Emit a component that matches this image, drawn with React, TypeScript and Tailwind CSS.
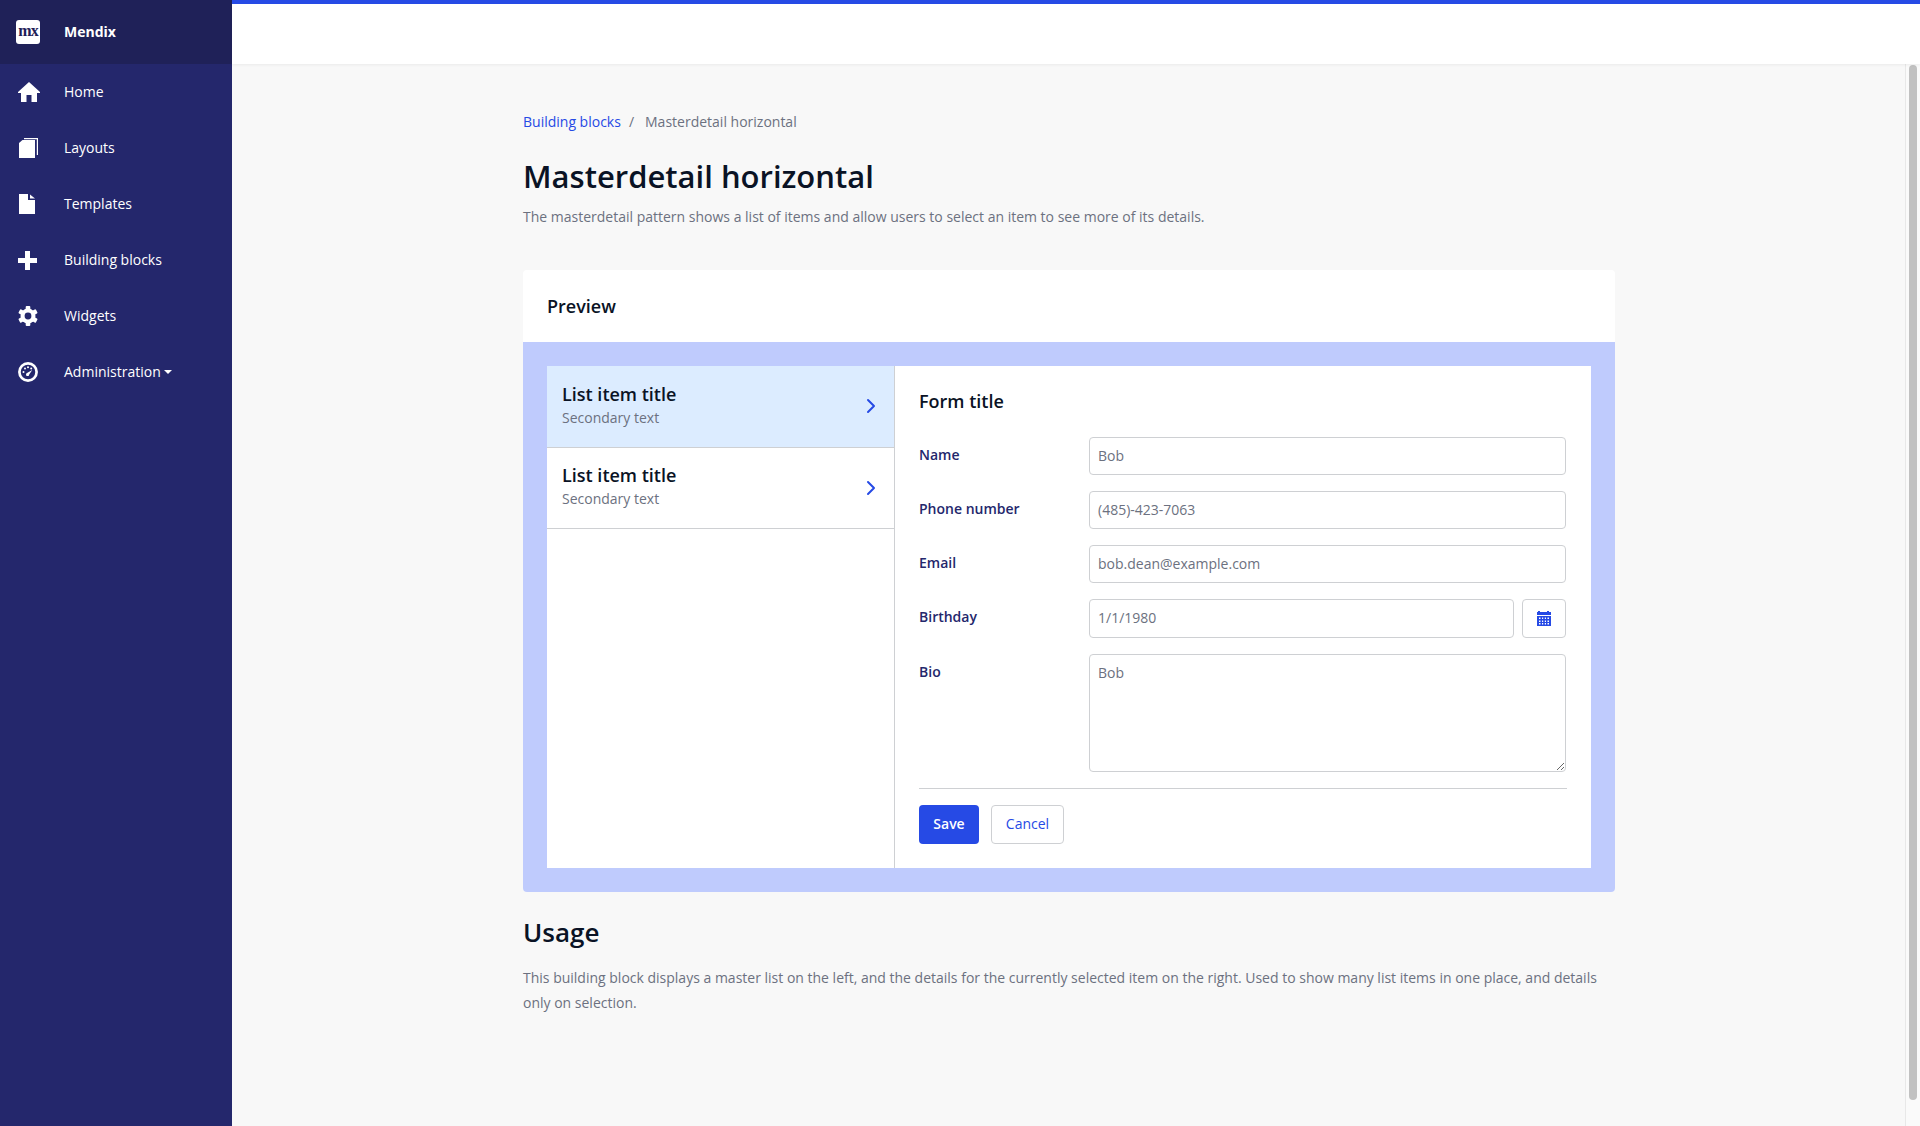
import React from 'react';
import { ChevronRight } from 'lucide-react';

const HomeIcon = () => (
  <svg width="22" height="20" viewBox="0 0 22 20" fill="white">
    <path d="M11 0 L22 10 L22 11 L19 11 L19 20 L13.5 20 L13.5 13 L8.5 13 L8.5 20 L3 20 L3 11 L0 11 L0 10 Z" />
  </svg>
);

const BookIcon = () => (
  <svg width="19" height="20" viewBox="0 0 19 20" fill="white" className="ml-px">
    <path d="M3.5 2 L16 2 L16 20 L0 20 L0 5 Z" />
    <path d="M5 0 H19 V17 H17.8 V1.2 H5 Z" />
  </svg>
);

const FileIcon = () => (
  <svg width="16" height="20" viewBox="0 0 16 20" fill="white" className="ml-px">
    <path d="M0 0 L9 0 L9 6 L16 6 L16 20 L0 20 Z" />
    <path d="M11 0.5 L16 4.5 L11 4.5 Z" />
  </svg>
);

const PlusIcon = () => (
  <svg width="19" height="19" viewBox="0 0 19 19" fill="white">
    <path d="M7 0 L12 0 L12 7 L19 7 L19 12 L12 12 L12 19 L7 19 L7 12 L0 12 L0 7 L7 7 Z" />
  </svg>
);

const GearIcon = () => (
  <svg width="20" height="20" viewBox="0 0 20 20">
    <g fill="white">
      <circle cx="10" cy="10" r="7.5" />
      <rect x="7.7" y="0" width="4.6" height="20" rx="1" />
      <rect x="7.7" y="0" width="4.6" height="20" rx="1" transform="rotate(60 10 10)" />
      <rect x="7.7" y="0" width="4.6" height="20" rx="1" transform="rotate(120 10 10)" />
    </g>
    <circle cx="10" cy="10" r="3.4" fill="#24276c" />
  </svg>
);

const GaugeIcon = () => (
  <svg width="20" height="20" viewBox="0 0 20 20">
    <circle cx="10" cy="10" r="8.6" fill="none" stroke="white" strokeWidth="2.7" />
    <g fill="white">
      <circle cx="5.5" cy="10" r="1" />
      <circle cx="7" cy="6.5" r="1" />
      <circle cx="10" cy="5.2" r="1" />
      <circle cx="13.2" cy="6.5" r="1" />
      <path d="M14.3 8 L11.2 12.4 A1.6 1.6 0 1 1 9 11 Z" />
    </g>
  </svg>
);

const CalendarIcon = () => (
  <svg width="14" height="15" viewBox="0 0 14 15" fill="#264ae5">
    <rect x="1" y="0" width="2" height="3" />
    <rect x="10" y="0" width="2" height="3" />
    <rect x="0" y="1" width="14" height="3" />
    <path fillRule="evenodd" d="M0 5 H14 V15 H0 Z M2 6.5 V8 H3.5 V6.5 Z M5 6.5 V8 H6.2 V6.5 Z M7.8 6.5 V8 H9 V6.5 Z M10.5 6.5 V8 H12 V6.5 Z M2 9.5 V11 H3.5 V9.5 Z M5 9.5 V11 H6.2 V9.5 Z M7.8 9.5 V11 H9 V9.5 Z M10.5 9.5 V11 H12 V9.5 Z M2 12 V13.5 H3.5 V12 Z M5 12 V13.5 H6.2 V12 Z M7.8 12 V13.5 H9 V12 Z M10.5 12 V13.5 H12 V12 Z" />
  </svg>
);

const navItems = [
  { label: 'Home', icon: <HomeIcon /> },
  { label: 'Layouts', icon: <BookIcon /> },
  { label: 'Templates', icon: <FileIcon /> },
  { label: 'Building blocks', icon: <PlusIcon /> },
  { label: 'Widgets', icon: <GearIcon /> },
];

const inputClass =
  'h-[38px] w-full rounded-[4px] border border-[#ced0d3] bg-white px-2 pb-[2px] text-sm text-[#6c7180] outline-none';

const Sidebar = () => (
  <aside className="flex h-full w-[232px] shrink-0 flex-col bg-[#24276c] text-sm text-white">
    <div className="flex h-16 shrink-0 items-center bg-[#1f2158]">
      <div className="ml-4 flex h-6 w-6 items-center justify-center rounded-[3px] bg-white">
        <span className="mt-[-2px] text-[16px] leading-none font-bold tracking-[-1px] text-[#1f2158] [font-family:'Liberation_Serif',serif]">
          mx
        </span>
      </div>
      <span className="ml-6 font-bold">Mendix</span>
    </div>
    {navItems.map((item) => (
      <a key={item.label} className="flex h-14 items-center">
        <span className="flex w-16 justify-start pl-[18px]">{item.icon}</span>
        {item.label}
      </a>
    ))}
    <a className="flex h-14 items-center">
      <span className="flex w-16 justify-start pl-[18px]">
        <GaugeIcon />
      </span>
      Administration
      <span className="mt-[-1px] ml-[3px] border-x-[4px] border-t-[4px] border-x-transparent border-t-white" />
    </a>
  </aside>
);

const ListItem = ({ selected }: { selected?: boolean }) => (
  <div
    className={
      'flex h-[81.5px] items-center justify-between border-b border-[#ced0d3] pr-[11px] pl-[15px] ' +
      (selected ? 'bg-[#dcecff]' : 'bg-white')
    }
  >
    <div className="pb-[3px]">
      <div className="text-[18px] leading-[25px] font-semibold text-[#0a1325]">List item title</div>
      <div className="mt-px text-sm leading-[20px] text-[#6c7180]">Secondary text</div>
    </div>
    <ChevronRight size={24} strokeWidth={2} className="text-[#264ae5]" />
  </div>
);

const FormRow = ({ label, children }: { label: string; children: React.ReactNode }) => (
  <div className="mr-px mb-4 flex">
    <label className="w-[170px] shrink-0 pt-2 text-sm leading-5 font-semibold text-[#24276c]">{label}</label>
    <div className="min-w-0 flex-1">{children}</div>
  </div>
);

const Preview = () => (
  <div className="mt-[43px] rounded-[4px] bg-white">
    <h3 className="flex h-[72px] items-center pl-6 text-[18px] font-semibold text-[#0a1325]">Preview</h3>
    <div className="rounded-b-[4px] bg-[#bfcbfd] p-6">
      <div className="flex h-[502px] bg-white">
        <div className="w-[348px] shrink-0 border-r border-[#ced0d3]">
          <ListItem selected />
          <ListItem />
        </div>
        <div className="flex-1 pt-[21px] pr-6 pl-6">
          <h4 className="mb-[22px] text-[18px] leading-[28px] font-semibold text-[#0a1325]">Form title</h4>
          <FormRow label="Name">
            <input className={inputClass} defaultValue="Bob" />
          </FormRow>
          <FormRow label="Phone number">
            <input className={inputClass} defaultValue="(485)-423-7063" />
          </FormRow>
          <FormRow label="Email">
            <input className={inputClass} defaultValue="bob.dean@example.com" />
          </FormRow>
          <FormRow label="Birthday">
            <div className="flex gap-2">
              <input
                className="h-[39px] w-full rounded-[4px] border border-[#ced0d3] bg-white px-2 pb-[2px] text-sm text-[#6c7180] outline-none"
                defaultValue="1/1/1980"
              />
              <button className="flex h-[39px] w-11 shrink-0 items-center justify-center rounded-[4px] border border-[#ced0d3] bg-white">
                <CalendarIcon />
              </button>
            </div>
          </FormRow>
          <FormRow label="Bio">
            <textarea
              className="block h-[118px] w-full rounded-[4px] border border-[#ced0d3] bg-white px-2 py-2 text-sm text-[#6c7180] outline-none"
              defaultValue="Bob"
            />
          </FormRow>
          <div className="flex gap-3 border-t border-[#ced0d3] pt-4">
            <button className="h-[39px] w-[60px] rounded-[4px] bg-[#264ae5] pb-px text-sm font-semibold text-white">Save</button>
            <button className="h-[39px] w-[73px] rounded-[4px] border border-[#ced0d3] bg-white pb-px text-sm text-[#264ae5]">Cancel</button>
          </div>
        </div>
      </div>
    </div>
  </div>
);

const App = () => {
  return (
    <div className="flex h-screen overflow-hidden bg-[#f8f8f8] font-['Open_Sans',sans-serif]">
      <Sidebar />
      <div className="flex min-w-0 flex-1 flex-col">
        <div className="relative z-10 h-16 shrink-0 border-t-4 border-[#264ae5] bg-white shadow-[0_1px_3px_rgba(0,0,0,0.06)]" />
        <div className="flex min-h-0 flex-1">
          <main className="min-w-0 flex-1">
            <div className="ml-[291px] w-[1092px] pt-12">
              <div className="flex text-sm leading-5">
                <a className="text-[#264ae5]">Building blocks</a>
                <span className="ml-2 text-[#6c7180]">/</span>
                <span className="ml-[11px] text-[#6c7180]">Masterdetail horizontal</span>
              </div>
              <h1 className="mt-[22px] text-[31px] leading-[44px] font-semibold text-[#0a1325]">Masterdetail horizontal</h1>
              <p className="mt-[9px] text-sm leading-5 text-[#6c7180]">
                The masterdetail pattern shows a list of items and allow users to select an item to see more of its details.
              </p>
              <Preview />
              <h2 className="mt-[22px] text-[26px] leading-9 font-semibold text-[#0a1325]">Usage</h2>
              <p className="mt-4 text-sm leading-[24.5px] text-[#6c7180]">
                This building block displays a master list on the left, and the details for the currently selected item on the right. Used to show many list items in one place, and details only on selection.
              </p>
            </div>
          </main>
          {/* scrollbar */}
          <div className="h-full w-[15px] shrink-0 border-l border-[#e8e8e8] bg-[#fafafa] pt-px pl-[3px]">
            <div className="h-[1035px] w-2 rounded-full bg-[#c1c1c1]" />
          </div>
        </div>
      </div>
    </div>
  );
};

export default App;
